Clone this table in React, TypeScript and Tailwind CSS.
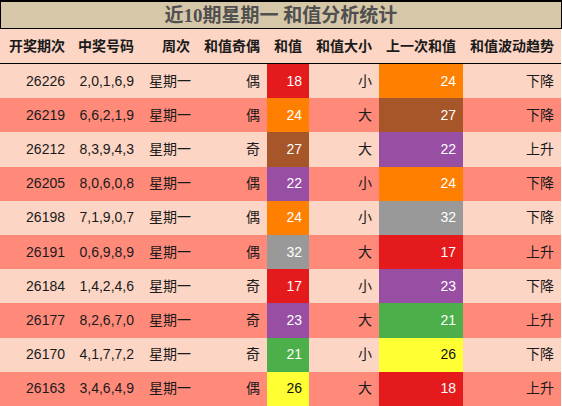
import React from "react";

type Row = {
  issue: string;
  nums: string;
  parity: string;
  sum: number;
  size: string;
  prev: number;
  trend: string;
};

const rows: Row[] = [
  { issue: "26226", nums: "2,0,1,6,9", parity: "偶", sum: 18, size: "小", prev: 24, trend: "下降" },
  { issue: "26219", nums: "6,6,2,1,9", parity: "偶", sum: 24, size: "大", prev: 27, trend: "下降" },
  { issue: "26212", nums: "8,3,9,4,3", parity: "奇", sum: 27, size: "大", prev: 22, trend: "上升" },
  { issue: "26205", nums: "8,0,6,0,8", parity: "偶", sum: 22, size: "小", prev: 24, trend: "下降" },
  { issue: "26198", nums: "7,1,9,0,7", parity: "偶", sum: 24, size: "小", prev: 32, trend: "下降" },
  { issue: "26191", nums: "0,6,9,8,9", parity: "偶", sum: 32, size: "大", prev: 17, trend: "上升" },
  { issue: "26184", nums: "1,4,2,4,6", parity: "奇", sum: 17, size: "小", prev: 23, trend: "下降" },
  { issue: "26177", nums: "8,2,6,7,0", parity: "奇", sum: 23, size: "大", prev: 21, trend: "上升" },
  { issue: "26170", nums: "4,1,7,7,2", parity: "奇", sum: 21, size: "小", prev: 26, trend: "下降" },
  { issue: "26163", nums: "3,4,6,4,9", parity: "偶", sum: 26, size: "大", prev: 18, trend: "上升" },
];

// colour per sum value
const sumColor: Record<number, string> = {
  17: "bg-[#e41a1c] text-white",
  18: "bg-[#e41a1c] text-white",
  21: "bg-[#4daf4a] text-white",
  22: "bg-[#984ea3] text-white",
  23: "bg-[#984ea3] text-white",
  24: "bg-[#ff7f00] text-white",
  26: "bg-[#ffff33] text-[#111]",
  27: "bg-[#a65628] text-white",
  32: "bg-[#999999] text-white",
};

const cols = "grid grid-cols-[72px_69px_56px_70px_42px_70px_84px_98px]";
const cell = "flex items-center justify-end pr-[7px] whitespace-nowrap";

const headers = ["开奖期次", "中奖号码", "周次", "和值奇偶", "和值", "和值大小", "上一次和值", "和值波动趋势"];

export default function App() {
  return (
    <div
      className="w-[562px] h-[406px] overflow-hidden bg-white text-[14px] text-[#1a1a1a]"
      style={{ fontFamily: '"Liberation Sans", "Noto Sans CJK SC", sans-serif' }}
    >
      <div className="w-[562px] h-[29px] border border-t-2 border-black bg-[#d6c7a8] flex items-center justify-center">
        <span
          className="text-[19px] font-bold text-[#505050] leading-none"
          style={{ fontFamily: '"Liberation Serif", "Noto Sans CJK SC", serif' }}
        >
          近10期星期一 和值分析统计
        </span>
      </div>

      <div className={`${cols} w-[561px] h-[35px] bg-[#fcd5c4] border-b-[1.5px] border-black font-bold`}>
        {headers.map((h) => (
          <div key={h} className={cell}>
            {h}
          </div>
        ))}
      </div>

      {rows.map((r, i) => (
        <div
          key={r.issue}
          className={`${cols} w-[561px] h-[34.2px] ${i % 2 === 0 ? "bg-[#fcd5c4]" : "bg-[#ff8a7a]"}`}
        >
          <div className={cell}>{r.issue}</div>
          <div className={cell}>{r.nums}</div>
          <div className="flex items-center whitespace-nowrap pl-[8px]">星期一</div>
          <div className={cell}>{r.parity}</div>
          <div className={`${cell} ${sumColor[r.sum]}`}>{r.sum}</div>
          <div className={cell}>{r.size}</div>
          <div className={`${cell} ${sumColor[r.prev]}`}>{r.prev}</div>
          <div className={cell}>{r.trend}</div>
        </div>
      ))}
    </div>
  );
}
